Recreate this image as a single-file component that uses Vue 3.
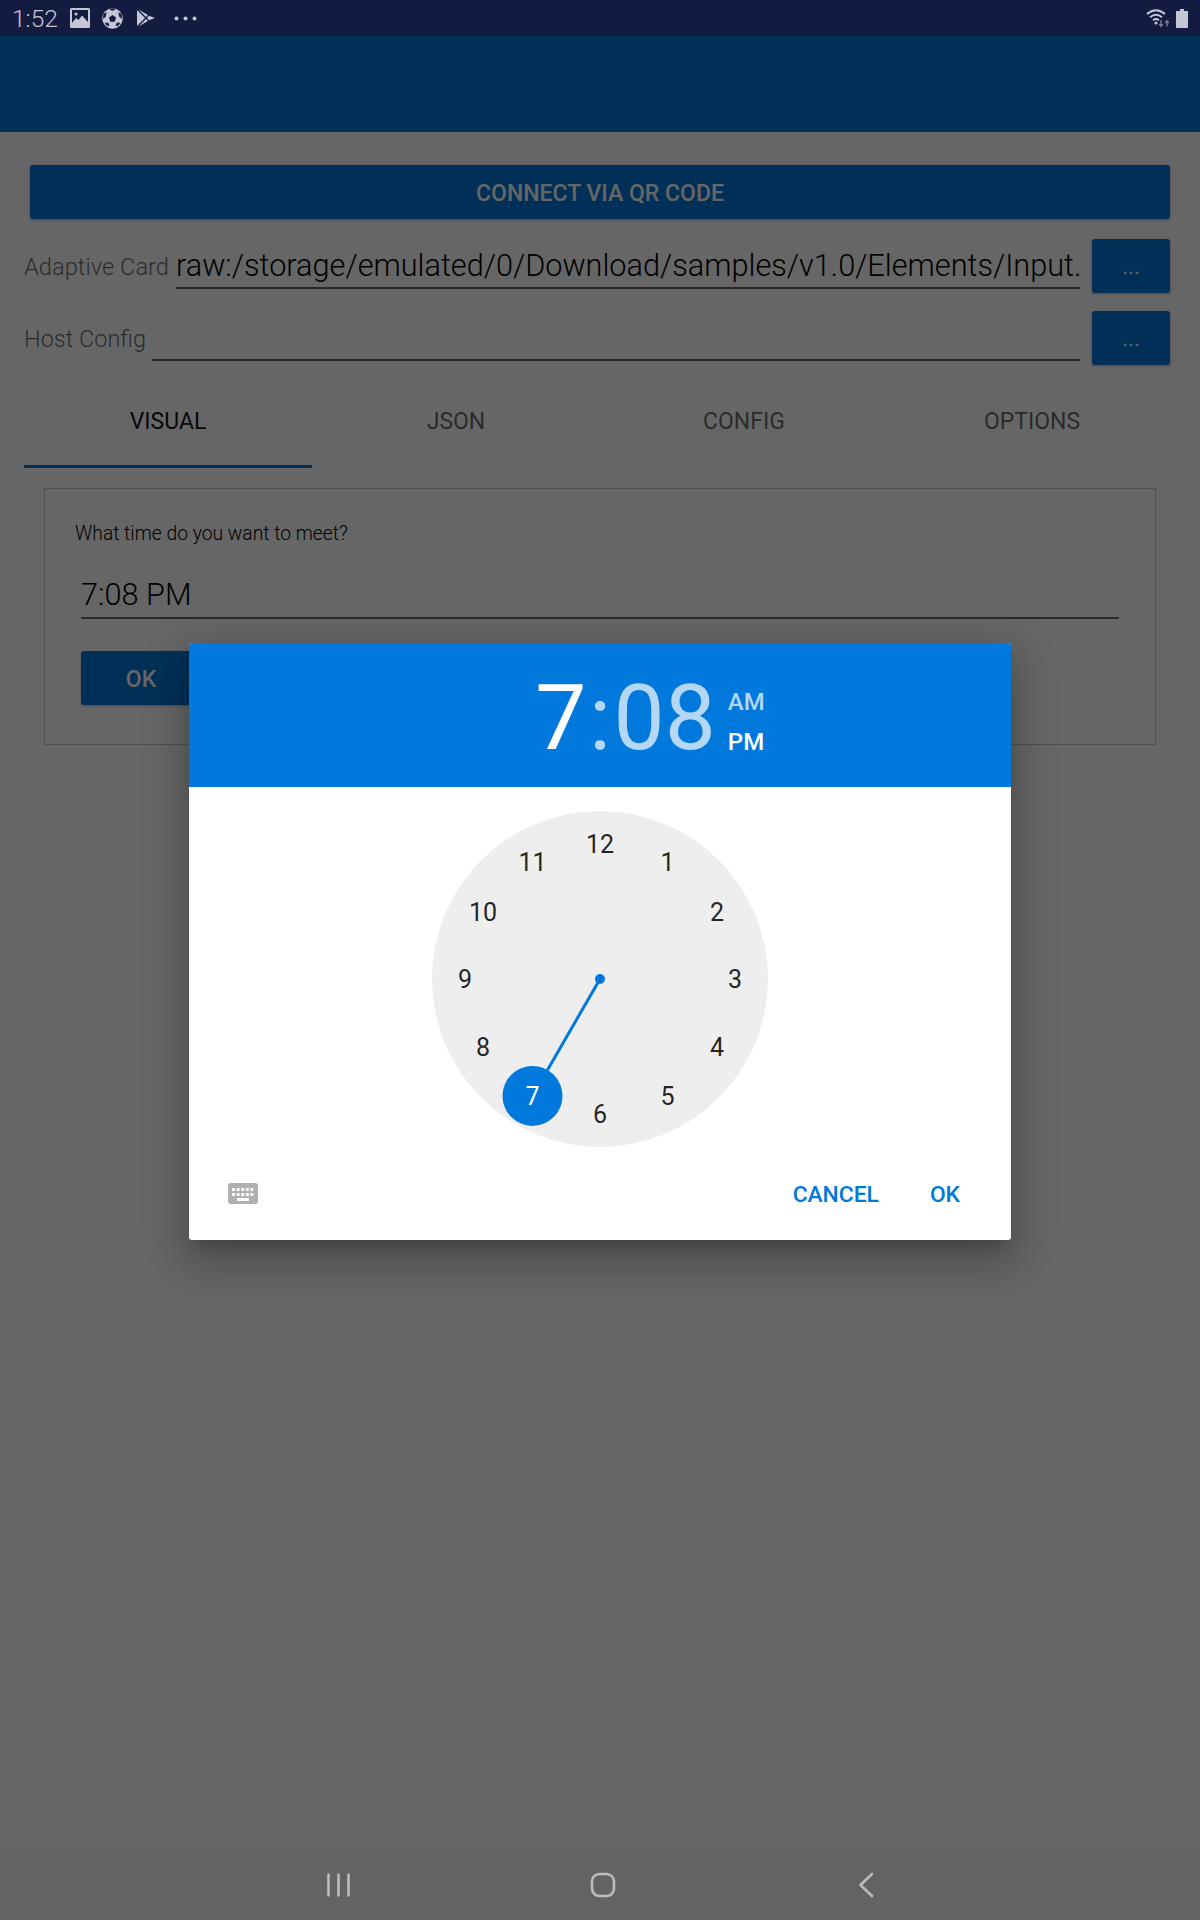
<script setup>
const tabs = ['VISUAL', 'JSON', 'CONFIG', 'OPTIONS']

// numbers sit on a circle round the centre of the face
const hours = Array.from({ length: 12 }, (_, i) => {
  const h = i + 1
  const a = (h * Math.PI) / 6
  return {
    h,
    x: 168 + 135 * Math.sin(a),
    y: 168 - 135 * Math.cos(a)
  }
})
</script>

<template>
  <div class="page">
    <div class="status">
      <span class="clock-text">1:52</span>
      <svg class="st-img" width="20" height="20" viewBox="0 0 20 20">
        <rect width="20" height="20" rx="1.5" fill="#c5c6d6" />
        <rect x="2" y="2" width="16" height="15" fill="#141b41" />
        <circle cx="6" cy="6" r="1.6" fill="#c5c6d6" />
        <path d="M2 15 L6 10 L8.5 12 L12 7.5 L18 14 L18 18 L2 18Z" fill="#c5c6d6" />
      </svg>
      <svg class="st-ball" width="21" height="21" viewBox="0 0 21 21">
        <circle cx="10.5" cy="10.5" r="10.3" fill="#c5c6d6" />
        <path d="M10.5 7 L14 9.6 L12.7 13.7 L8.3 13.7 L7 9.6Z" fill="#141b41" />
        <path d="M7.2 1.2 L10.5 2.8 L13.8 1.2 L10.5 0.2Z M1.4 6 L1 11 L3.8 8.8 L4.6 4.2Z M19.6 6 L20 11 L17.2 8.8 L16.4 4.2Z M4.2 17.6 L7.4 18 L6.5 15 L2.9 14.6Z M16.8 17.6 L13.6 18 L14.5 15 L18.1 14.6Z" fill="#141b41" />
      </svg>
      <svg class="st-play" width="18" height="18" viewBox="0 0 18 18">
        <path d="M0 1 L8 9 L0 17Z M1.5 0.4 L11 6 L9 8Z M1.5 17.6 L11 12 L9 10Z M12 6.8 L18 9 L12 11.2 L10 9Z" fill="#c5c6d6" />
      </svg>
      <svg class="st-more" width="23" height="5" viewBox="0 0 23 5">
        <circle cx="2.5" cy="2.5" r="2" fill="#c5c6d6" />
        <circle cx="11.5" cy="2.5" r="2" fill="#c5c6d6" />
        <circle cx="20.5" cy="2.5" r="2" fill="#c5c6d6" />
      </svg>
      <svg class="st-wifi" width="24" height="20" viewBox="0 0 24 20">
        <path d="M1 6 Q10 -1.5 19 6 M4 9.2 Q10 4.3 16 9.2 M7 12.3 Q10 9.8 13 12.3" fill="none" stroke="#c5c6d6" stroke-width="1.8" />
        <circle cx="10" cy="15" r="1.6" fill="#c5c6d6" />
        <path d="M15 12 V18 M13.2 16 L15 18.5 L16.8 16" fill="none" stroke="#7d7f98" stroke-width="1.3" />
        <path d="M21 18.5 V13 M19.2 15 L21 12.5 L22.8 15" fill="none" stroke="#7d7f98" stroke-width="1.3" />
      </svg>
      <svg class="st-batt" width="12" height="19" viewBox="0 0 12 19">
        <path d="M4 0 H8 V2 H11 Q12 2 12 3 V18 Q12 19 11 19 H1 Q0 19 0 18 V3 Q0 2 1 2 H4Z" fill="#c5c6d6" />
      </svg>
    </div>

    <div class="appbar"></div>

    <div class="content">
      <button class="btn connect">CONNECT VIA QR CODE</button>

      <div class="field-row">
        <span class="field-label">Adaptive Card</span>
        <div class="field-input">raw:/storage/emulated/0/Download/samples/v1.0/Elements/Input.</div>
        <button class="btn more">...</button>
      </div>
      <div class="field-row second">
        <span class="field-label">Host Config</span>
        <div class="field-input"></div>
        <button class="btn more">...</button>
      </div>

      <div class="tabs">
        <div v-for="(t, i) in tabs" :key="t" class="tab" :class="{ active: i === 0 }">{{ t }}</div>
      </div>

      <div class="card">
        <div class="question">What time do you want to meet?</div>
        <div class="time-input">7:08 PM</div>
        <button class="btn ok">OK</button>
      </div>
    </div>

    <div class="navbar">
      <svg width="23" height="24" viewBox="0 0 23 24">
        <path d="M1.5 1.5 V22.5 M11.5 1.5 V22.5 M21.5 1.5 V22.5" stroke="#bcbcbc" stroke-width="2.6" stroke-linecap="round" />
      </svg>
      <svg class="nav-home" width="26" height="26" viewBox="0 0 26 26">
        <rect x="2" y="2" width="22" height="22" rx="7.5" fill="none" stroke="#bcbcbc" stroke-width="2.6" />
      </svg>
      <svg class="nav-back" width="16" height="26" viewBox="0 0 16 26">
        <path d="M14 2 L2.5 13 L14 24" fill="none" stroke="#bcbcbc" stroke-width="2.6" stroke-linecap="round" stroke-linejoin="round" />
      </svg>
    </div>

    <div class="scrim">
      <div class="dialog">
        <div class="dlg-head">
          <span class="hh">7</span>
          <span class="colon">:</span>
          <div class="head-right">
            <span class="mm">08</span>
            <div class="ampm">
              <span>AM</span>
              <span class="on">PM</span>
            </div>
          </div>
        </div>

        <div class="face-wrap">
          <div class="face">
            <svg class="hand" width="336" height="336" viewBox="0 0 336 336">
              <line x1="168" y1="168" x2="100.5" y2="284.9" stroke="#0078dc" stroke-width="3" />
              <circle cx="168" cy="168" r="5" fill="#0078dc" />
              <circle cx="100.5" cy="284.9" r="30" fill="#0078dc" />
            </svg>
            <span
              v-for="n in hours"
              :key="n.h"
              class="num"
              :class="{ sel: n.h === 7 }"
              :style="{ left: n.x + 'px', top: n.y + 'px' }"
            >{{ n.h }}</span>
          </div>
        </div>

        <div class="dlg-foot">
          <svg width="30" height="21" viewBox="0 0 30 21">
            <rect width="30" height="21" rx="3" fill="#b0b0b0" />
            <g fill="#fff">
              <rect x="4" y="5" width="3" height="3" />
              <rect x="8.6" y="5" width="3" height="3" />
              <rect x="13.2" y="5" width="3" height="3" />
              <rect x="17.8" y="5" width="3" height="3" />
              <rect x="22.4" y="5" width="3" height="3" />
              <rect x="4" y="10" width="3" height="3" />
              <rect x="8.6" y="10" width="3" height="3" />
              <rect x="13.2" y="10" width="3" height="3" />
              <rect x="17.8" y="10" width="3" height="3" />
              <rect x="22.4" y="10" width="3" height="3" />
              <rect x="9" y="15" width="12" height="3" />
            </g>
          </svg>
          <div class="foot-btns">
            <span>CANCEL</span>
            <span>OK</span>
          </div>
        </div>
      </div>
    </div>
  </div>
</template>

<style>
html, body { margin: 0; background: #fff; }
</style>

<style scoped>
.page {
  position: relative;
  width: 1200px;
  height: 1920px;
  display: flex;
  flex-direction: column;
  overflow: hidden;
  background: #fff;
  font-family: Roboto, "Liberation Sans", sans-serif;
}

.status {
  height: 36px;
  flex: none;
  display: flex;
  align-items: center;
  padding: 0 12px 0 12px;
  box-sizing: border-box;
  background: #141b41;
  color: #c5c6d6;
  position: relative;
  z-index: 2;
}
.clock-text { font-size: 24.5px; font-weight: 300; width: 58px; }
.st-img { margin-right: 12px; }
.st-ball { margin-right: 14px; }
.st-play { margin-right: 19px; }
.st-wifi { margin-left: auto; margin-right: 6px; }

.appbar { height: 96px; flex: none; background: #0078dc; }

.content { flex: 1; padding-top: 33px; }

.btn {
  display: block;
  border: 0;
  padding: 0;
  background: #0078dc;
  color: #fff;
  border-radius: 3px;
  font-family: inherit;
  font-weight: 500;
  box-shadow: 0 1px 3px rgba(0, 0, 0, 0.3);
}
.connect {
  width: 1140px;
  height: 54px;
  margin: 0 30px;
  padding-top: 2px;
  font-size: 23px;
}

.field-row {
  display: flex;
  align-items: flex-start;
  margin: 20px 30px 0 24px;
}
.field-row.second { margin-top: 18px; }
.field-label {
  height: 54px;
  line-height: 57px;
  margin-right: 7px;
  font-size: 23.7px;
  font-weight: 300;
  color: rgba(0, 0, 0, 0.6);
  white-space: nowrap;
}
.second .field-label { margin-right: 6px; font-size: 23.5px; }
.field-input {
  flex: 1;
  height: 48px;
  line-height: 54px;
  border-bottom: 2px solid rgba(0, 0, 0, 0.6);
  font-size: 30.7px;
  font-weight: 300;
  color: #000;
  white-space: nowrap;
  overflow: hidden;
}
.more {
  width: 78px;
  height: 54px;
  margin-left: 12px;
  font-size: 22px;
  font-weight: 400;
  flex: none;
}

.tabs {
  display: grid;
  grid-template-columns: repeat(4, 288px);
  margin: 10px 0 0 24px;
}
.tab {
  height: 93px;
  box-sizing: border-box;
  padding-top: 33px;
  line-height: 28px;
  text-align: center;
  font-size: 23px;
  color: rgba(0, 0, 0, 0.6);
}
.tab.active {
  color: rgba(0, 0, 0, 0.95);
  border-bottom: 3px solid #0078dc;
}

.card {
  width: 1112px;
  height: 257px;
  box-sizing: border-box;
  margin: 20px 0 0 44px;
  padding: 33px 36px 0 30px;
  border: 1px solid #c8c8c8;
}
.question {
  font-size: 19.3px;
  font-weight: 300;
  line-height: 24px;
  color: #000;
}
.time-input {
  margin: 23px 0 0 6px;
  height: 48px;
  line-height: 52px;
  font-size: 30.7px;
  font-weight: 300;
  color: #000;
  border-bottom: 2px solid rgba(0, 0, 0, 0.6);
}
.ok {
  width: 120px;
  height: 54px;
  margin: 32px 0 0 6px;
  padding-top: 2px;
  font-size: 23px;
}

.navbar {
  height: 72px;
  flex: none;
  display: flex;
  align-items: center;
  padding: 2px 0 0 327px;
  box-sizing: border-box;
  position: relative;
  z-index: 2;
  background: #636363;
}
.nav-home { margin-left: 240px; }
.nav-back { margin-left: 242px; }

.scrim {
  position: absolute;
  left: 0;
  right: 0;
  top: 36px;
  bottom: 72px;
  padding-bottom: 1px;
  box-sizing: border-box;
  display: flex;
  align-items: center;
  justify-content: center;
  background: rgba(0, 0, 0, 0.6);
}

.dialog {
  width: 822px;
  height: 597px;
  background: #fff;
  border-radius: 3px;
  overflow: hidden;
  box-shadow: 0 11px 15px -7px rgba(0, 0, 0, 0.2), 0 24px 38px 3px rgba(0, 0, 0, 0.14), 0 9px 46px 8px rgba(0, 0, 0, 0.12);
}

.dlg-head {
  height: 144px;
  background: #0078dc;
  display: grid;
  grid-template-columns: 1fr auto 1fr;
  align-items: center;
  color: #b3d7f5;
}
.hh, .colon, .mm {
  font-size: 91px;
  line-height: 151px;
  height: 144px;
}
.hh { justify-self: end; color: #fff; }
.colon { padding: 0 2.5px; }
.head-right { display: flex; align-items: center; }
.ampm {
  display: flex;
  flex-direction: column;
  margin: 14px 0 0 12px;
  font-size: 24px;
  font-weight: 500;
  line-height: 40px;
}
.ampm .on { color: #fff; }

.face-wrap {
  height: 360px;
  box-sizing: border-box;
  padding-top: 24px;
  display: flex;
  justify-content: center;
}
.face {
  position: relative;
  width: 336px;
  height: 336px;
  border-radius: 50%;
  background: #eee;
}
.hand { position: absolute; left: 0; top: 0; }
.num {
  position: absolute;
  margin-top: 1px;
  transform: translate(-50%, -50%);
  font-size: 25px;
  line-height: 30px;
  color: rgba(0, 0, 0, 0.87);
}
.num.sel { color: #fff; }

.dlg-foot {
  height: 93px;
  display: flex;
  align-items: center;
  justify-content: space-between;
  padding: 0 51px 0 39px;
}
.foot-btns {
  display: flex;
  gap: 51px;
  margin-top: 2px;
  font-size: 22.8px;
  font-weight: 500;
  color: #0078dc;
}
</style>
